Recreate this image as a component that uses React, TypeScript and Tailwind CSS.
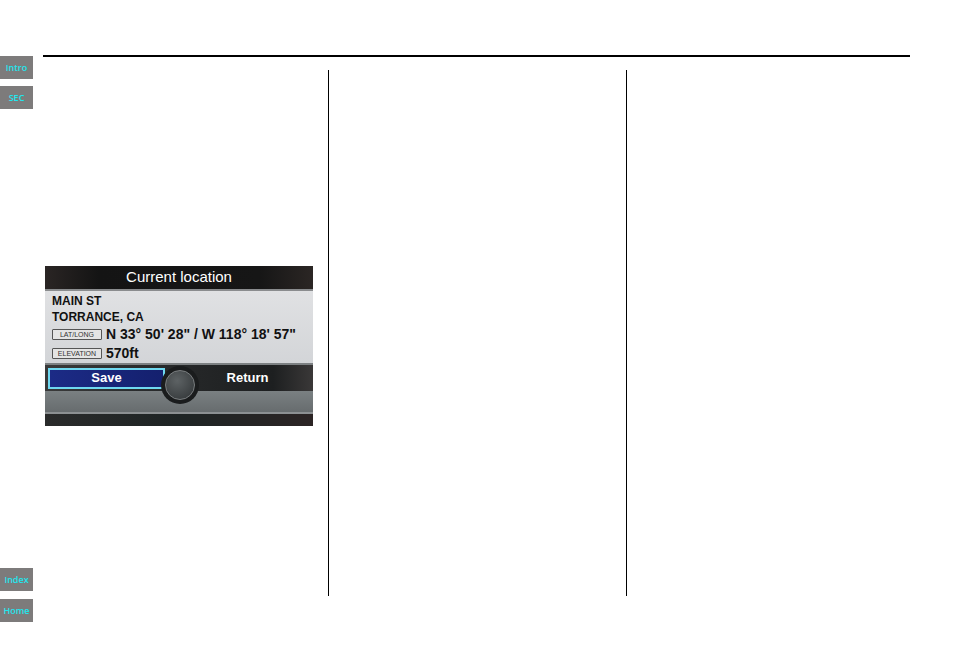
import React from "react";

const font = { fontFamily: '"Liberation Sans", Arial, sans-serif' };

function SideTab({ label }: { label: string }) {
  return (
    <div
      className="flex h-[23px] w-[33px] items-center justify-center bg-[#7d7b7b] text-[9px] font-semibold text-[#22e6ee]"
      style={{ fontFamily: '"Open Sans", sans-serif' }}
    >
      {label}
    </div>
  );
}

function Tag({ label }: { label: string }) {
  return (
    <span className="mr-[4px] inline-flex h-[11px] w-[50px] items-center justify-center rounded-[1px] border border-[#555] bg-[#e4e4e4] text-[7px] font-normal leading-none tracking-normal text-[#333]">
      {label}
    </span>
  );
}

function CurrentLocation() {
  return (
    <div className="relative flex h-[160px] w-[268px] flex-col overflow-hidden bg-[#222]" style={font}>
      <div className="flex h-[23px] items-center justify-center bg-[linear-gradient(90deg,#2a2524,#141414_20%,#161616_80%,#2b2624)] text-[15px] text-white">
        Current location
      </div>
      <div className="h-[2px] bg-[#8a8c8e]" />
      <div className="flex h-[72px] flex-col bg-[linear-gradient(180deg,#e0e1e3,#d3d5d8)] px-[7px] pt-[3px] text-[#111]">
        <div className="text-[12px] font-bold leading-[15px]">MAIN ST</div>
        <div className="text-[12px] font-bold leading-[16px]">TORRANCE, CA</div>
        <div className="mt-[1px] flex items-center text-[14px] font-bold leading-[17px]">
          <Tag label="LAT/LONG" />
          N 33° 50' 28" / W 118° 18' 57"
        </div>
        <div className="mt-[2px] flex items-center text-[14px] font-bold leading-[17px]">
          <Tag label="ELEVATION" />
          570ft
        </div>
      </div>
      <div className="h-[2px] bg-[#7c8082]" />
      <div className="flex h-[26px] items-center bg-[linear-gradient(90deg,#3a3a3a,#2b2d2e_30%,#1d1f20_85%,#3a3838)] px-[3px]">
        <div className="flex h-[21px] w-[117px] items-center justify-center border-2 border-[#6fd8f0] bg-[linear-gradient(90deg,#1c2b86,#14206e)] text-[13px] font-bold text-white">
          Save
        </div>
        <div className="flex flex-1 items-center justify-center pl-[20px] text-[13px] font-bold text-white">Return</div>
      </div>
      <div className="h-[21px] bg-[linear-gradient(180deg,#7a8082,#676c6e)]" />
      <div className="h-[2px] bg-[#8c9092]" />
      <div className="flex-1 bg-[linear-gradient(90deg,#2a2b2b,#1e2424_50%,#2b2424)]" />
      <div className="absolute left-[116px] top-[100px] h-[38px] w-[38px] rounded-full bg-[#1a1c1d] p-[4px]">
        <div className="h-full w-full rounded-full border border-[#7a7e80] bg-[radial-gradient(circle_at_40%_35%,#5d6264,#2f3335)]" />
      </div>
    </div>
  );
}

export default function App() {
  return (
    <div className="relative h-[650px] w-[954px] bg-white">
      <div className="absolute left-0 top-[56px] flex flex-col gap-[7px]">
        <SideTab label="Intro" />
        <SideTab label="SEC" />
      </div>
      <div className="absolute left-0 top-[568px] flex flex-col gap-[8px]">
        <SideTab label="Index" />
        <SideTab label="Home" />
      </div>
      <div className="ml-[43px] w-[867px] pt-[55px]">
        <div className="h-[2px] bg-black" />
        <div className="mt-[13px] flex h-[526px]">
          <div className="w-[285px] pl-[2px] pt-[196px]">
            <CurrentLocation />
          </div>
          <div className="w-px bg-black" />
          <div className="w-[297px]" />
          <div className="w-px bg-black" />
          <div className="flex-1" />
        </div>
      </div>
    </div>
  );
}
